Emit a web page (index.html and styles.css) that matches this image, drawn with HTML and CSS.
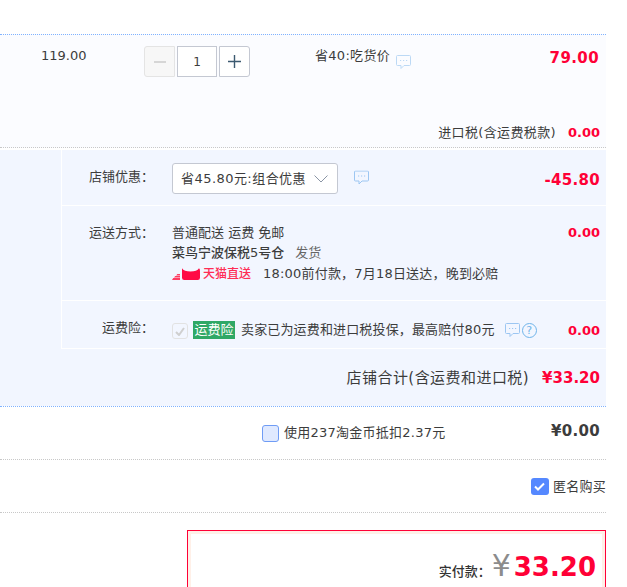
FILE: index.html
```html
<!DOCTYPE html>
<html lang="zh">
<head>
<meta charset="utf-8">
<title>确认订单</title>
<link rel="stylesheet" href="styles.css">
</head>
<body>
<main class="page">
  <section class="item">
    <div class="item-top">
      <div class="unit-price">119.00</div>
      <div class="stepper">
        <span class="step step-minus"><svg width="12" height="12" viewBox="0 0 12 12"><path d="M0 6h12" stroke="#c8c8c8" stroke-width="1.4"/></svg></span>
        <span class="qty">1</span>
        <span class="step step-plus"><svg width="13" height="13" viewBox="0 0 13 13"><path d="M0 6.500h13M6.500 0v13" stroke="#3c5a70" stroke-width="1.4"/></svg></span>
      </div>
      <div class="promo">省40:吃货价</div>
      <svg class="bubble bubble-faint" width="15" height="14" viewBox="0 0 15 14"><use href="#bubble"/></svg>
      <div class="item-total price">79.00</div>
    </div>
    <div class="tax"><span class="tax-label">进口税(含运费税款)</span><b class="price tax-value">0.00</b></div>
  </section>

  <section class="shop">
    <div class="shop-side"></div>
    <div class="shop-main">
      <div class="row row-discount">
        <div class="label">店铺优惠：</div>
        <div class="select">
          <span class="select-text">省45.80元:组合优惠</span>
          <svg width="14" height="8" viewBox="0 0 14 8"><path d="M.5.5 7 7l6.500-6.500" fill="none" stroke="#8a95a5"/></svg>
        </div>
        <svg class="bubble bubble-big" width="15" height="15" viewBox="0 0 15 14"><use href="#bubble"/></svg>
        <div class="amount price discount">-45.80</div>
      </div>
      <div class="row row-ship">
        <div class="label">运送方式：</div>
        <div class="ship-info">
          <div>普通配送 运费 免邮</div>
          <div class="warehouse"><span>菜鸟宁波保税5号仓</span><span class="ship-verb">发货</span></div>
          <div class="direct">
            <span class="direct-logo">
              <svg width="28" height="12" viewBox="0 0 28 12"><path d="M0 12 1.200 10H8v2zM2 9.400 3.200 8H8v1.400zM4.200 7.400 5.300 6H8v1.400z" fill="#ff3d62"/><path d="M10 .3Q12 3.500 18.500 3.500 25 3.500 27 .3 28 1 28 3v6.700Q28 12 25.700 12H12.300Q10 12 10 9.700z" fill="#ff0a45"/></svg>
              <span class="direct-name">天猫直送</span>
            </span>
            <span class="direct-text">18:00前付款，7月18日送达，晚到必赔</span>
          </div>
        </div>
        <div class="amount price">0.00</div>
      </div>
      <div class="row row-ins">
        <div class="label">运费险：</div>
        <div class="ins-info">
          <span class="check-off"><svg width="10" height="9" viewBox="0 0 10 9"><path d="m1 5 3 3 5-7" fill="none" stroke="#cfcfcf" stroke-width="2"/></svg></span>
          <span class="ins-tag">运费险</span>
          <span class="ins-text">卖家已为运费和进口税投保，最高赔付80元</span>
          <svg class="bubble" width="15" height="14" viewBox="0 0 15 14"><use href="#bubble"/></svg>
          <span class="help">?</span>
        </div>
        <div class="amount amount-ins price">0.00</div>
      </div>
    </div>
    <div class="shop-total"><span class="total-label">店铺合计(含运费和进口税)</span><b class="price total-value">¥33.20</b></div>
  </section>

  <section class="coin">
    <span class="coin-box"></span>
    <span class="coin-text">使用237淘金币抵扣2.37元</span>
    <b class="coin-value">¥0.00</b>
  </section>

  <section class="anon">
    <span class="anon-box"><svg width="11" height="9" viewBox="0 0 11 9"><path d="m1 4.500 3 3 6-6" fill="none" stroke="#fff" stroke-width="2"/></svg></span>
    <span class="anon-text">匿名购买</span>
  </section>

  <section class="pay">
    <div class="pay-inner">
      <span class="pay-label">实付款：</span>
      <span class="pay-yen">¥</span>
      <span class="pay-value">33.20</span>
    </div>
  </section>
</main>
<svg class="defs" width="0" height="0">
  <symbol id="bubble" viewBox="0 0 15 14">
    <path d="M1.500.5h12q1 0 1 1v8q0 1-1 1H8l-3 3v-3H1.500q-1 0-1-1v-8q0-1 1-1z" fill="none" stroke="currentColor"/>
    <path d="M4 5.500h1.200M7 5.500h1.200M10 5.500h1.200" stroke="currentColor"/>
  </symbol>
</svg>
</body>
</html>
```

FILE: styles.css
```css
* { box-sizing: border-box; }
html, body { margin: 0; padding: 0; background: #fff; }
body {
  width: 627px;
  height: 587px;
  overflow: hidden;
  font: 13px/16px "DejaVu Sans", "Noto Sans CJK SC", sans-serif;
  color: #3c3c3c;
}
.page { width: 606px; padding-top: 34px; }
.defs { position: absolute; }
.price { color: #ff0036; font-weight: 700; }

.item {
  height: 114px;
  background: #fbfcff;
  border-top: 1px dotted #80b2ff;
  border-bottom: 1px dotted #c8c8c8;
  display: flex;
  flex-direction: column;
  justify-content: space-between;
}
.item-top { display: flex; align-items: flex-start; padding-top: 11px; }
.unit-price { width: 144px; padding-left: 41px; line-height: 20px; }
.stepper { display: flex; width: 171px; gap: 2px; }
.step, .qty {
  height: 31px;
  border: 1px solid #c4c8d2;
  background: #fff;
  display: flex;
  align-items: center;
  justify-content: center;
}
.step { width: 31px; }
.step-minus { background: #f7f7f7; border-color: #e4e4e4; border-radius: 3px 0 0 3px; }
.step-plus { border-radius: 0 3px 3px 0; }
.qty { width: 40px; font-size: 12px; }
.promo { line-height: 20px; white-space: nowrap; letter-spacing: .3px; }
.bubble { color: #9cc6f2; flex: none; }
.bubble-faint { margin: 9px 0 0 6px; color: #bcd9f5; }
.item-total { margin-left: auto; padding-right: 7px; font-size: 15px; line-height: 24px; letter-spacing: .4px; }
.tax { display: flex; justify-content: flex-end; align-items: center; gap: 12px; padding: 0 6px 6px 0; }
.tax-label { letter-spacing: .35px; }
.tax-value { font-size: 13px; }

.shop {
  margin-top: 2px;
  background: #f2f6ff;
  display: grid;
  grid-template-columns: 61px 1fr;
  grid-template-rows: 199px 57px;
}
.shop-main { min-width: 0; border-left: 1px solid #fff; }
.row { display: grid; grid-template-columns: 110px 1fr auto; padding-right: 6px; border-bottom: 1px solid #fff; }
.row-discount { height: 56px; grid-template-columns: 110px auto auto 1fr; padding-top: 13px; }
.row-ship { height: 95px; padding-top: 19px; }
.row-ins { height: 48px; padding-top: 19px; }
.label { padding-right: 18px; text-align: right; white-space: nowrap; }
.row-discount .label { padding-top: 6px; }
.select {
  width: 166px;
  height: 31px;
  border: 1px solid #c4c8d2;
  border-radius: 3px;
  background: #fff;
  display: flex;
  align-items: center;
  justify-content: space-between;
  padding: 0 9px 0 8px;
  white-space: nowrap;
}
.select-text { letter-spacing: .45px; }
.bubble-big { margin: 7px 0 0 16px; }
.amount { text-align: right; font-size: 13px; line-height: 16px; }
.discount { font-size: 15px; padding-top: 9px; letter-spacing: .3px; }
.amount-ins { padding-top: 3px; }
.ship-info { line-height: 20px; margin-top: -2px; }
.warehouse { display: flex; gap: 11px; }
.warehouse span:first-child { font-weight: 500; }
.ship-verb { color: #666; }
.direct { display: flex; align-items: center; gap: 12px; margin-top: 1px; white-space: nowrap; }
.direct-logo { display: flex; align-items: center; gap: 3px; }
.direct-name { color: #ff2d55; font-size: 12px; font-weight: 500; }
.direct-text { letter-spacing: .2px; }
.ins-info { display: flex; align-items: center; white-space: nowrap; height: 18px; margin-top: 1px; }
.check-off {
  width: 16px;
  height: 16px;
  margin-top: 2px;
  border: 1px solid #e2e2e2;
  border-radius: 3px;
  display: flex;
  align-items: center;
  justify-content: center;
}
.ins-tag { margin-left: 5px; padding: 0 1.500px; height: 18px; line-height: 18px; background: #2fa866; color: #fff; }
.ins-text { margin-left: 6px; letter-spacing: .15px; }
.ins-info .bubble { margin-left: 10px; }
.help {
  width: 15px;
  height: 15px;
  margin-left: 2px;
  border: 1px solid #6fb4ea;
  border-radius: 50%;
  color: #6fb4ea;
  font-size: 11px;
  line-height: 13px;
  text-align: center;
}
.shop-total {
  grid-column: 1 / -1;
  display: flex;
  justify-content: flex-end;
  align-items: center;
  gap: 13px;
  padding: 0 6px 0 0;
  font-size: 15px;
}
.total-label { letter-spacing: .45px; }
.total-value { font-size: 15px; }

.coin {
  height: 54px;
  border-top: 1px dotted #80b2ff;
  border-bottom: 1px dotted #c8c8c8;
  display: flex;
  align-items: center;
  padding: 0 6px 0 262px;
}
.coin-box {
  width: 17px;
  height: 17px;
  border: 1px solid #6f9cf5;
  border-radius: 3px;
  background: #dfe9ff;
}
.coin-text { margin-left: 5px; letter-spacing: .25px; }
.coin-value { margin-left: auto; font-size: 15px; margin-top: -4px; letter-spacing: .3px; }

.anon {
  height: 53px;
  padding-top: 1px;
  border-bottom: 1px dotted #c8c8c8;
  display: flex;
  align-items: center;
  justify-content: flex-end;
  gap: 4px;
}
.anon-text { letter-spacing: .25px; }
.anon-box {
  width: 18px;
  height: 17px;
  border-radius: 3px;
  background: #5588ff;
  display: flex;
  align-items: center;
  justify-content: center;
}

.pay { margin: 17px 0 0 187px; border: 1px solid #ff0036; border-bottom: 0; height: 57px; }
.pay-inner {
  height: 100%;
  border: 3px solid #fff0e8;
  border-bottom: 0;
  display: flex;
  align-items: flex-end;
  justify-content: flex-end;
  padding: 0 6px 0 0;
}
.pay-label { color: #333; font-weight: 500; line-height: 16px; margin-bottom: 7px; }
.pay-yen { margin: 0 0 6px 1px; color: #8c8c8c; font-size: 30px; line-height: 30px; }
.pay-value { margin: 0 0 5px 3px; color: #ff0036; font-size: 26px; line-height: 30px; font-weight: 700; }
```
